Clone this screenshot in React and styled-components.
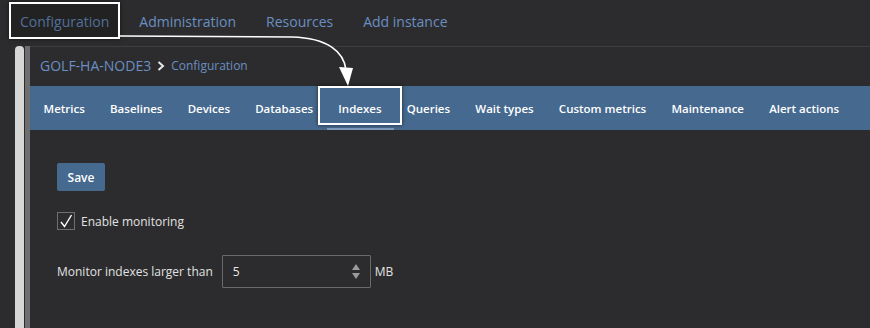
import React from "react";
import styled, { createGlobalStyle } from "styled-components";

const GlobalStyle = createGlobalStyle`
  html, body {
    margin: 0;
    padding: 0;
    background: #2c2c2e;
    overflow: hidden;
  }
  * {
    box-sizing: border-box;
  }
`;

const Page = styled.div`
  position: relative;
  width: 870px;
  height: 328px;
  background: #2c2c2e;
  font-family: "Open Sans", "Noto Sans", sans-serif;
  overflow: hidden;
`;

const TopNav = styled.div`
  height: 46px;
  display: flex;
  align-items: center;
  padding-left: 5px;
  padding-bottom: 4px;
`;

const TopItem = styled.div`
  padding: 0 15px;
  font-size: 14px;
  color: #6a8fc2;
  white-space: nowrap;
`;

const Body = styled.div`
  display: flex;
  height: 282px;
  padding-left: 15px;
`;

const Rail = styled.div`
  display: flex;
  gap: 1px;
`;

const RailBar = styled.div`
  width: ${(p) => p.$w}px;
  background: ${(p) => p.$c};
  border-radius: ${(p) => (p.$round ? "4px 4px 0 0" : "0")};
`;

const Main = styled.div`
  flex: 1;
  display: flex;
  flex-direction: column;
  border-top: 1px solid #3e3e41;
`;

const Breadcrumb = styled.div`
  height: 39px;
  display: flex;
  align-items: center;
  padding-left: 10px;
  gap: 6px;
  padding-bottom: 2px;
`;

const Crumb = styled.span`
  font-size: ${(p) => p.$size}px;
  color: #6a8fc2;
`;

const TabBar = styled.div`
  height: 44px;
  background: #46698f;
  display: flex;
  align-items: stretch;
  padding-left: 1px;
`;

const Tab = styled.div`
  position: relative;
  display: flex;
  align-items: center;
  padding: 0 12.6px;
  font-size: 11.5px;
  font-weight: 600;
  color: #ffffff;
  white-space: nowrap;
  &::after {
    content: "";
    display: ${(p) => (p.$active ? "block" : "none")};
    position: absolute;
    left: 1px;
    right: 0;
    bottom: 0;
    height: 2px;
    background: #7e9cbf;
  }
`;

const Content = styled.div`
  padding: 33px 0 0 27px;
  display: flex;
  flex-direction: column;
  align-items: flex-start;
`;

const SaveButton = styled.button`
  width: 48px;
  height: 28px;
  background: #46698f;
  border: none;
  border-radius: 2px;
  color: #fff;
  font-family: inherit;
  font-size: 12px;
  font-weight: 600;
  padding: 0;
`;

const CheckRow = styled.label`
  display: flex;
  align-items: center;
  gap: 6px;
  margin-top: 21px;
  font-size: 12px;
  color: #e2e2e2;
`;

const CheckBox = styled.span`
  width: 18px;
  height: 18px;
  border: 1px solid #6f6f72;
  display: flex;
  align-items: center;
  justify-content: center;
`;

const FieldRow = styled.div`
  display: flex;
  align-items: center;
  margin-top: 25px;
  font-size: 12px;
  color: #e2e2e2;
`;

const NumberBox = styled.div`
  width: 149px;
  height: 33px;
  margin: 0 4px 0 9px;
  border: 1px solid #6a6a6d;
  border-radius: 1px;
  display: flex;
  align-items: center;
  justify-content: space-between;
  padding: 0 10px 0 10px;
  color: #e8e8e8;
  font-size: 12px;
`;

const Spinner = styled.div`
  display: flex;
  flex-direction: column;
  gap: 3px;
`;

const Tri = styled.span`
  width: 0;
  height: 0;
  border-left: 4.5px solid transparent;
  border-right: 4.5px solid transparent;
  ${(p) =>
    p.$up
      ? "border-bottom: 6px solid #9a9a9c;"
      : "border-top: 6px solid #9a9a9c;"}
`;

// annotation frames drawn over the page
const HighlightBox = styled.div`
  position: absolute;
  left: ${(p) => p.$x}px;
  top: ${(p) => p.$y}px;
  width: ${(p) => p.$w}px;
  height: ${(p) => p.$h}px;
  border: 2px solid #ffffff;
  background: ${(p) => p.$bg};
  box-shadow: 0 0 4px rgba(0, 0, 0, 0.6);
  pointer-events: none;
`;

const Overlay = styled.svg`
  position: absolute;
  left: 0;
  top: 0;
  pointer-events: none;
`;

const topItems = ["Configuration", "Administration", "Resources", "Add instance"];
const tabs = [
  "Metrics",
  "Baselines",
  "Devices",
  "Databases",
  "Indexes",
  "Queries",
  "Wait types",
  "Custom metrics",
  "Maintenance",
  "Alert actions",
];

export default function App() {
  return (
    <Page>
      <GlobalStyle />
      <TopNav>
        {topItems.map((t) => (
          <TopItem key={t}>{t}</TopItem>
        ))}
      </TopNav>
      <Body>
        <Rail>
          <RailBar $w={9} $c="#d6d6d6" $round />
          <RailBar $w={5} $c="#6e6e70" />
        </Rail>
        <Main>
          <Breadcrumb>
            <Crumb $size={14}>GOLF-HA-NODE3</Crumb>
            <svg width="8" height="10" viewBox="0 0 8 10">
              <polyline
                points="1.5,1 6,5 1.5,9"
                fill="none"
                stroke="#e6e6e6"
                strokeWidth="2"
              />
            </svg>
            <Crumb $size={12}>Configuration</Crumb>
          </Breadcrumb>
          <TabBar>
            {tabs.map((t) => (
              <Tab key={t} $active={t === "Indexes"}>
                {t}
              </Tab>
            ))}
          </TabBar>
          <Content>
            <SaveButton>Save</SaveButton>
            <CheckRow>
              <CheckBox>
                <svg width="14" height="14" viewBox="0 0 14 14">
                  <polyline
                    points="2,8 5.5,12.5 12.5,1"
                    fill="none"
                    stroke="#ffffff"
                    strokeWidth="1.4"
                  />
                </svg>
              </CheckBox>
              Enable monitoring
            </CheckRow>
            <FieldRow>
              Monitor indexes larger than
              <NumberBox>
                5
                <Spinner>
                  <Tri $up />
                  <Tri />
                </Spinner>
              </NumberBox>
              MB
            </FieldRow>
          </Content>
        </Main>
      </Body>

      <HighlightBox $x={9} $y={2} $w={111} $h={37} $bg="rgba(0,0,0,0.22)" />
      <HighlightBox $x={318} $y={86} $w={84} $h={39} $bg="transparent" />
      <Overlay width="870" height="328">
        <path
          d="M120 36 L292 37 C328 38 344 52 346 70"
          fill="none"
          stroke="#ffffff"
          strokeWidth="1.6"
        />
        <polygon points="339,67 353,68 348,86" fill="#ffffff" />
      </Overlay>
    </Page>
  );
}
